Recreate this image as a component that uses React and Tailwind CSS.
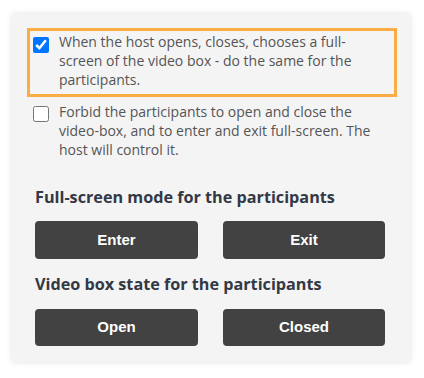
import React, { useState } from "react";

export default function App() {
  const [sync, setSync] = useState(true);
  const [forbid, setForbid] = useState(false);

  return (
    <div className="w-[424px] h-[378px] bg-white pt-[14px] pl-[12px] font-['Open_Sans',sans-serif]">
      <div className="w-[398px] h-[348px] bg-[#f4f4f4] shadow-[0_0_6px_rgba(0,0,0,0.12)] pt-[14px] px-[15px]">
        {/* highlighted option */}
        <label className="flex gap-[10px] w-[370px] border-[3px] border-[#fbad45] pl-[3px] pr-2 pt-[1px] pb-[5px] text-[14px] leading-[19px] text-[#555]">
          <input
            type="checkbox"
            checked={sync}
            onChange={(e) => setSync(e.target.checked)}
            className="w-[16px] h-[16px] mt-[5px] shrink-0 accent-[#0075ff]"
          />
          <span>
            When the host opens, closes, chooses a full-screen of the video box - do the same for the participants.
          </span>
        </label>

        <label className="flex gap-[10px] mt-[5px] pl-[6px] pr-2 text-[14px] leading-[19px] text-[#555]">
          <input
            type="checkbox"
            checked={forbid}
            onChange={(e) => setForbid(e.target.checked)}
            className="w-[16px] h-[16px] mt-[4px] shrink-0"
          />
          <span>
            Forbid the participants to open and close the video-box, and to enter and exit full-screen. The host will control it.
          </span>
        </label>

        <div className="px-[8px]">
          <h3 className="mt-[27px] text-[16.2px] leading-[22px] font-bold text-[#333845]">
            Full-screen mode for the participants
          </h3>
          <div className="flex gap-[25px] mt-[13px]">
            <button className="w-[163px] h-[38px] rounded-[4px] bg-[#424242] text-white text-[15px] font-bold font-['Liberation_Sans',Arial,sans-serif]">
              Enter
            </button>
            <button className="w-[162px] h-[38px] rounded-[4px] bg-[#424242] text-white text-[15px] font-bold font-['Liberation_Sans',Arial,sans-serif]">
              Exit
            </button>
          </div>

          <h3 className="mt-[14px] text-[16.2px] leading-[22px] font-bold text-[#333845]">
            Video box state for the participants
          </h3>
          <div className="flex gap-[25px] mt-[14px]">
            <button className="w-[163px] h-[37px] rounded-[4px] bg-[#424242] text-white text-[15px] font-bold font-['Liberation_Sans',Arial,sans-serif]">
              Open
            </button>
            <button className="w-[162px] h-[37px] rounded-[4px] bg-[#424242] text-white text-[15px] font-bold font-['Liberation_Sans',Arial,sans-serif]">
              Closed
            </button>
          </div>
        </div>
      </div>
    </div>
  );
}
